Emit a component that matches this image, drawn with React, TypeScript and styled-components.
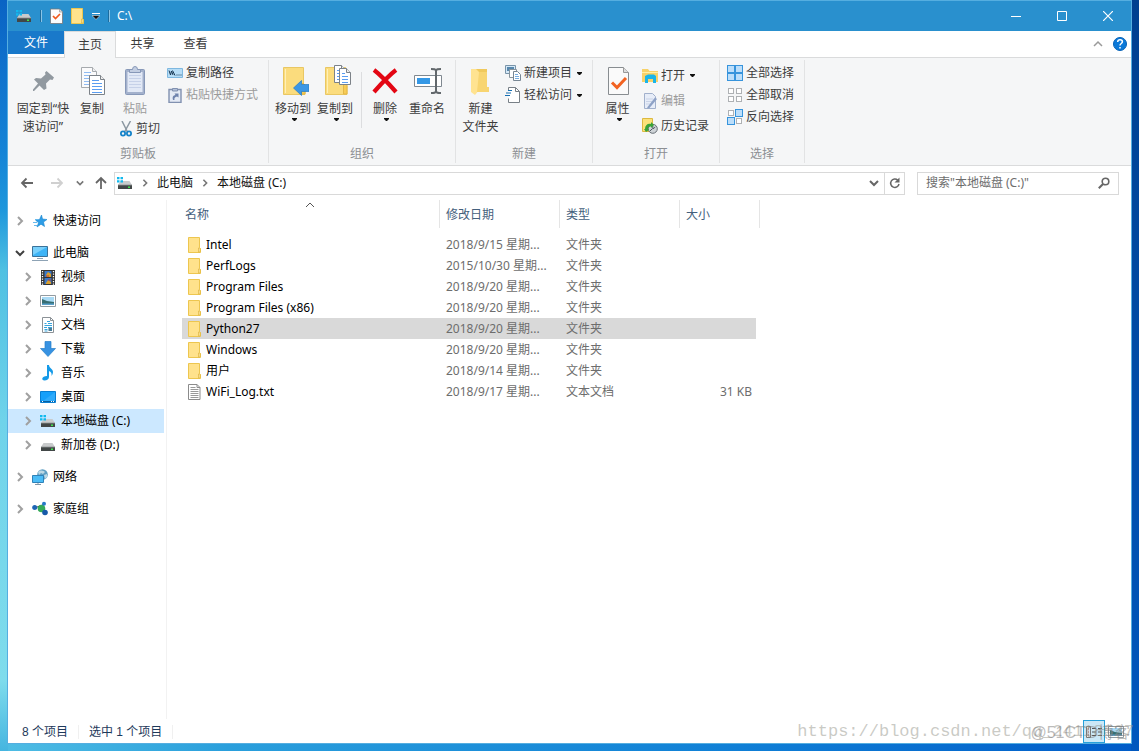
import React from 'react';
import styled, { createGlobalStyle, css } from 'styled-components';

const GlobalStyle = createGlobalStyle`
  *, *::before, *::after { box-sizing: border-box; }
  body {
    margin: 0;
    font-family: "Noto Sans", "Noto Sans CJK SC", sans-serif;
    font-size: 12px;
    line-height: 18px;
    color: #1b1b1b;
  }
  button, input {
    margin: 0;
    padding: 0;
    border: 0;
    background: none;
    font: inherit;
    color: inherit;
  }
  svg { display: block; flex: none; }
`;

const Desktop = styled.div`
  position: relative;
  display: flex;
  min-height: 100vh;
  padding: 0 7px 7px;
  background:
    linear-gradient(180deg, #0a63c4 0, #1483d6 150px, #1e97dc 210px, #4fc0e2 270px, #6fd3ea 420px, #7fdcec 680px, #45b5e0 100%) left / 8px 100% no-repeat,
    linear-gradient(180deg, #003f8f 0, #00479c 200px, #0058be 100%) right / 8px 100% no-repeat,
    linear-gradient(90deg, #4fbde4 0, #2a9fdc 20%, #0f7fd6 65%, #005cc8 100%);
`;

const Window = styled.main`
  flex: 1;
  min-width: 0;
  display: flex;
  flex-direction: column;
  background: #fff;
  border: 1px solid #55aee0;
`;

const TitleBar = styled.header`
  display: flex;
  align-items: center;
  height: 30px;
  padding-left: 8px;
  background: #2990ce;
  color: #fff;
`;

const QuickTools = styled.div`
  display: flex;
  align-items: center;
  gap: 8px;
`;

const ToolButton = styled.button`
  display: flex;
`;

const ToolDivider = styled.span`
  width: 2px;
  height: 12px;
  border-left: 1px solid #1c6c9e;
  border-right: 1px solid #8ac4e6;
`;

const Title = styled.h1`
  margin: 0 0 0 7px;
  font-size: 12px;
  font-weight: 400;
`;

const WindowControls = styled.div`
  display: flex;
  margin-left: auto;
  height: 100%;
`;

const ControlButton = styled.button`
  display: grid;
  place-items: center;
  width: 46px;
`;

const TabBar = styled.nav`
  display: flex;
  height: 27px;
  border-bottom: 1px solid #dadbdc;
  padding-right: 4px;
`;

const Tab = styled.button<{ $kind?: 'file' | 'active' }>`
  width: 53px;
  height: 26px;
  color: #3a3a3a;
  ${({ $kind }) => $kind === 'file' && css`
    width: 56px;
    height: 23px;
    background: #1979ca;
    color: #fff;
  `}
  ${({ $kind }) => $kind === 'active' && css`
    width: 52px;
    height: 27px;
    background: #f5f6f7;
    border: 1px solid #dadbdc;
    border-bottom: 0;
  `}
`;

const TabTools = styled.div`
  display: flex;
  align-items: center;
  gap: 10px;
  margin-left: auto;
`;

const Ribbon = styled.section`
  display: flex;
  min-height: 108px;
  padding: 2px 0;
  background: #f5f6f7;
  border-bottom: 1px solid #dadbdc;
`;

const RibbonGroup = styled.section<{ $width: number; $inset: number }>`
  display: flex;
  flex-direction: column;
  justify-content: space-between;
  width: ${({ $width }) => $width}px;
  padding: 1px 0 0 ${({ $inset }) => $inset}px;
  border-right: 1px solid #e2e3e4;
`;

const GroupTools = styled.div`
  display: flex;
  align-items: flex-start;
`;

const GroupLabel = styled.h2<{ $inset: number }>`
  margin: 0 0 0 -${({ $inset }) => $inset}px;
  font-size: 12px;
  font-weight: 400;
  text-align: center;
  color: #8c8f93;
`;

const LargeButton = styled.button<{ $width: number }>`
  display: flex;
  flex-direction: column;
  align-items: center;
  gap: 3px;
  width: ${({ $width }) => $width}px;
  padding-top: 4px;
  color: #3c3c3c;
  white-space: nowrap;
  &:disabled { color: #9b9b9b; }
`;

const LargeText = styled.span`
  display: flex;
  flex-direction: column;
  align-items: center;
  > svg { margin-left: 4px; }
`;

const ToolColumn = styled.div<{ $width?: number; $top?: number }>`
  display: flex;
  flex-direction: column;
  align-items: flex-start;
  width: ${({ $width }) => ($width ? `${$width}px` : 'auto')};
  padding-top: ${({ $top = 0 }) => $top}px;
`;

const SmallButton = styled.button<{ $tall?: boolean; $indent?: boolean }>`
  display: flex;
  align-items: center;
  gap: 3px;
  height: ${({ $tall }) => ($tall ? 25 : 22)}px;
  padding-left: ${({ $indent }) => ($indent ? 7 : 0)}px;
  color: #3c3c3c;
  white-space: nowrap;
  &:disabled { color: #9b9b9b; }
  > span + svg { margin-left: 2px; }
`;

const ToolSeparator = styled.span`
  width: 1px;
  height: 56px;
  margin: 11px 2px 0 5px;
  background: #dcdddf;
`;

const AddressRow = styled.div`
  display: flex;
  align-items: center;
  height: 34px;
  padding: 0 12px 0 4px;
`;

const NavButton = styled.button`
  display: grid;
  place-items: center;
  height: 24px;
`;

const NavButtons = styled.div`
  display: grid;
  grid-template-columns: 30px 30px 16px 26px;
`;

const AddressBox = styled.div`
  flex: 1;
  display: flex;
  align-items: center;
  height: 23px;
  border: 1px solid #d9d9d9;
  padding-left: 2px;
`;

const Crumbs = styled.div`
  display: flex;
  align-items: center;
  gap: 8px;
`;

const Crumb = styled.a`
  color: #111;
  text-decoration: none;
`;

const BoxButton = styled.button<{ $divided?: boolean }>`
  display: grid;
  place-items: center;
  width: 20px;
  height: 21px;
  border-left: ${({ $divided }) => ($divided ? '1px solid #d9d9d9' : '0')};
`;

const SearchBox = styled.label`
  display: flex;
  align-items: center;
  width: 202px;
  height: 23px;
  margin-left: 12px;
  padding: 0 8px;
  border: 1px solid #d9d9d9;
`;

const SearchInput = styled.input`
  flex: 1;
  min-width: 0;
  outline: 0;
  &::placeholder { color: #6d6d6d; opacity: 1; }
`;

const Body = styled.div`
  flex: 1;
  display: flex;
`;

const Sidebar = styled.nav`
  display: flex;
  flex-direction: column;
  gap: 8px;
  width: 159px;
  padding: 9px 2px 0 0;
  border-right: 1px solid #f2f2f2;
`;

const TreeList = styled.ul`
  margin: 0;
  padding: 0;
  list-style: none;
`;

const TreeRow = styled.a<{ $child?: boolean; $selected?: boolean }>`
  display: flex;
  align-items: center;
  height: 24px;
  padding-left: ${({ $child }) => ($child ? 15 : 7)}px;
  background: ${({ $selected }) => ($selected ? '#cce8ff' : 'transparent')};
  color: #000;
  text-decoration: none;
  white-space: nowrap;
`;

const TreeIcon = styled.span`
  margin: 0 5px 0 7px;
`;

const FileArea = styled.section`
  flex: 1;
  min-width: 0;
  padding-left: 15px;
`;

const FileTable = styled.table`
  width: 578px;
  table-layout: fixed;
  border-spacing: 0;
`;

const HeadCell = styled.th<{ $first?: boolean }>`
  position: relative;
  height: 28px;
  padding: 2px 0 0 ${({ $first }) => ($first ? 3 : 6)}px;
  border-right: 1px solid #e5e5e5;
  font-weight: 400;
  text-align: left;
  color: #44607c;
`;

const SortMark = styled.span`
  position: absolute;
  top: 0;
  left: 50%;
  margin-left: -6px;
`;

const SpacerCell = styled.td`
  height: 6px;
  padding: 0;
`;

const FileRow = styled.tr<{ $selected?: boolean }>`
  --row: ${({ $selected }) => ($selected ? '#d9d9d9' : 'transparent')};
`;

const FileCell = styled.td<{ $last?: boolean }>`
  height: 21px;
  padding: 0 ${({ $last }) => ($last ? 4 : 0)}px 0 6px;
  border-right: ${({ $last }) => ($last ? 4 : 0)}px solid transparent;
  background: var(--row);
  background-clip: padding-box;
  color: #6d6d6d;
  text-align: ${({ $last }) => ($last ? 'right' : 'left')};
  white-space: nowrap;
`;

const FileName = styled.span`
  display: flex;
  align-items: center;
  gap: 5px;
  color: #000;
`;

const StatusBar = styled.footer`
  display: flex;
  align-items: center;
  height: 24px;
  padding: 1px 4px 0 14px;
  color: #1e395b;
  font-family: "Liberation Sans", "Noto Sans CJK SC", sans-serif;
`;

const StatusText = styled.span`
  padding-right: 10px;
  margin-right: 10px;
  line-height: 14px;
  border-right: 1px solid #f0f0f0;
`;

const ViewButtons = styled.div`
  display: flex;
  margin-left: auto;
`;

const ViewButton = styled.button<{ $selected?: boolean }>`
  display: grid;
  place-items: center;
  width: 22px;
  height: 23px;
  border: 1px solid ${({ $selected }) => ($selected ? '#26a0da' : 'transparent')};
  background: ${({ $selected }) => ($selected ? '#cbe8f6' : 'transparent')};
`;

const UrlMark = styled.span`
  position: absolute;
  right: 5px;
  bottom: 7px;
  color: rgba(150, 150, 140, 0.5);
  font: 17px/24px "Liberation Mono", monospace;
`;

const SiteMark = styled.span`
  position: absolute;
  right: 9px;
  bottom: 6px;
  color: rgba(120, 120, 120, 0.5);
  font: 16px/24px "Liberation Sans", "Noto Sans CJK SC", sans-serif;
`;

/* ---------- icons ---------- */

const Drive = ({ win = false }: { win?: boolean }) => (
  <svg width="16" height="16" viewBox="0 0 16 16">
    <path d="M3.500 6h9L15 10H1z" fill="#c9cbcc" />
    <path d="M1 10h14v4H1z" fill="#424747" />
    <path d="M1 10h14" stroke="#8e9292" strokeWidth=".8" />
    <path d="M11 11.500h2v1.500h-2z" fill="#3fe34c" />
    {win && (
      <path d="M0 2h2.500v2.300H0zM3.500 2H6v2.300H3.500zM0 5.300h2.500v2.200H0zM3.500 5.300H6v2.200H3.500z" fill="#10b9ee" />
    )}
  </svg>
);

const Folder = () => (
  <svg width="13" height="16" viewBox="0 0 13 16">
    <path d="M.5.5h11v10l1 1v4H.5z" fill="#ffe28c" stroke="#edc64f" />
    <path d="M10.500 15v-4h1.500v4z" fill="#fff0b8" stroke="#e0b53d" strokeWidth=".7" />
  </svg>
);

const TextFile = () => (
  <svg width="13" height="16" viewBox="0 0 13 16">
    <path d="M.5.5h8.500l3 3v12H.5z" fill="#fff" stroke="#8b8b8b" />
    <path d="M9 .5v3h3" fill="none" stroke="#8b8b8b" />
    <path d="M2.500 3.500h5M2.500 5.500h8M2.500 7.500h8M2.500 9.500h8M2.500 11.500h8M2.500 13.500h8" stroke="#999" />
  </svg>
);

const CheckPage = () => (
  <svg width="13" height="16" viewBox="0 0 13 16">
    <path d="M.5 1h9l3 3v11.500H.5z" fill="#fcfcfc" stroke="#777" strokeWidth=".8" />
    <path d="M9.500 1v3h3" fill="#ddd" stroke="#999" strokeWidth=".7" />
    <path d="M3 8l2.500 2.500L10 6" fill="none" stroke="#f0591c" strokeWidth="1.700" />
  </svg>
);

const Caret = () => (
  <svg width="5" height="3" viewBox="0 0 5 3"><path d="M0 0h5v1L3 3H2L0 1z" fill="#111" /></svg>
);

type Dir = 'up' | 'down' | 'right';
const Chevron = ({ dir, color = '#777', size = 8, weight = 1.5 }: { dir: Dir; color?: string; size?: number; weight?: number }) => {
  const d = { up: 'M1 7l4-4 4 4', down: 'M1 3l4 4 4-4', right: 'M3 1l4 4-4 4' }[dir];
  return (
    <svg width={size} height={size} viewBox="0 0 10 10">
      <path d={d} fill="none" stroke={color} strokeWidth={weight} />
    </svg>
  );
};

const Arrow = ({ dir, color }: { dir: 'left' | 'right' | 'up'; color: string }) => (
  <svg width="14" height="14" viewBox="0 0 14 14">
    <path
      d={{ left: 'M13 7H2M6.500 2.500L2 7l4.500 4.500', right: 'M1 7h11M7.500 2.500L12 7l-4.500 4.500', up: 'M7 13V2M2 7l5-5 5 5' }[dir]}
      fill="none" stroke={color} strokeWidth="1.800"
    />
  </svg>
);

const Pin = () => (
  <svg width="32" height="32" viewBox="0 0 32 32">
    <path d="M19.500 6L27 12.500l-1.500 2.500-2.500-.5-4 4 .5 5L17 25l-4.500-4.500L7 26H6v-1.500l5-6L7 14.500 9 13l5 .5 4.500-4L18 7.500z" fill="#9199a0" />
  </svg>
);

const Page = ({ x, y, w = 15, h = 20 }: { x: number; y: number; w?: number; h?: number }) => (
  <g transform={`translate(${x} ${y})`}>
    <path d={`M.5 .5h${w - 4}l4 4v${h - 4}H.5z`} fill="#fff" stroke="#7c8288" />
    <path d={`M${w - 3.5} .5v4h4`} fill="#eee" stroke="#7c8288" />
    <path d={`M3 5.500h${w - 8}M3 8.500h${w - 5}M3 11.500h${w - 5}M3 14.500h${w - 5}`} stroke="#5b9df0" />
    {h > 18 && <path d={`M3 17.500h${w - 5}`} stroke="#5b9df0" />}
  </g>
);

const CopyPages = () => (
  <svg width="32" height="32" viewBox="0 0 32 32">
    <g opacity=".65"><Page x={5} y={2} /></g>
    <Page x={13} y={10} h={19} />
  </svg>
);

const Clipboard = () => (
  <svg width="32" height="32" viewBox="0 0 32 32">
    <rect x="6.500" y="4.500" width="19" height="25" rx="1" fill="#a3b1cc" stroke="#8798b8" />
    <path d="M8.500 7h15v20h-15z" fill="#e2e9f6" />
    <path d="M10 10.500h12M10 13.500h12M10 16.500h12M10 19.500h12M10 22.500h12" stroke="#c6d1e8" />
    <path d="M10.500 7.500V4.500h3a2.500 3 0 015 0h3v3z" fill="#c3cee2" stroke="#8798b8" />
  </svg>
);

const Scissors = () => (
  <svg width="14" height="16" viewBox="0 0 14 16">
    <path d="M3 0l5.500 11M11.500 0L5.500 11" stroke="#8b97a1" strokeWidth="1.500" />
    <circle cx="4" cy="12.500" r="2.100" fill="none" stroke="#1583c9" strokeWidth="1.800" />
    <circle cx="10" cy="12.500" r="2.100" fill="none" stroke="#1583c9" strokeWidth="1.800" />
  </svg>
);

const PathIcon = () => (
  <svg width="16" height="16" viewBox="0 0 16 16">
    <path d="M.5 3.500h15v9H.5z" fill="#b6ddf6" stroke="#7eb8e0" />
    <path d="M2 5.500l1.500 4.500L4.500 6l1.500 4M5.500 5.500L8 10.500M9.500 10h1M11.500 10h1M13.500 10h1" fill="none" stroke="#173753" />
  </svg>
);

const PasteLink = () => (
  <svg width="16" height="16" viewBox="0 0 16 16">
    <path d="M2 2.500h12v13H2z" fill="#e4eaf5" stroke="#8191b0" strokeWidth="1.400" />
    <path d="M5.500 4V1.500h5V4z" fill="#b3c0d8" stroke="#8191b0" />
    <path d="M6 13c-1-3 0-4.500 2.500-5L7.500 6.500h4v4L10 9.500c-2 .5-3 1.500-2.500 3.500z" fill="#6f83ad" />
  </svg>
);

const BigFolder = ({ children }: { children?: React.ReactNode }) => (
  <svg width="32" height="32" viewBox="0 0 32 32">
    <path d="M6.500 2.500h20v17l1.500 1v9H6.500z" fill="#fbdc7d" stroke="#e9c763" />
    <path d="M8.500 4v24" stroke="#fff0b6" />
    <path d="M24.500 29v-9.500l1.500-1.500 2 2V29z" fill="#f8cc55" stroke="#e3b748" />
    {children}
  </svg>
);

const MoveTo = () => (
  <BigFolder><path d="M16.500 23l8-7.500v4H32v7h-7.500v4z" fill="#3b97e5" stroke="#257bc5" strokeWidth=".7" /></BigFolder>
);

const CopyTo = () => (
  <BigFolder>
    <Page x={15} y={0} w={11} h={17} />
    <Page x={20} y={3} w={11} h={16} />
  </BigFolder>
);

const DeleteIcon = () => (
  <svg width="32" height="32" viewBox="0 0 32 32">
    <path d="M5 5c8 6 15 14 22 22M27 5C19 11 12 19 5 27" fill="none" stroke="#e30613" strokeWidth="4.200" />
  </svg>
);

const RenameIcon = () => (
  <svg width="32" height="32" viewBox="0 0 32 32">
    <path d="M3.500 10.500h27v11h-27z" fill="#fff" stroke="#7f8890" />
    <path d="M6 13h13v6H6z" fill="#3498e6" />
    <path d="M20 4c3 0 5 0 5 2v20c0 2-2 2-5 2M30 4c-3 0-5 0-5 2v20c0 2 2 2 5 2" fill="none" stroke="#62686c" strokeWidth="2" />
  </svg>
);

const NewFolder = () => (
  <svg width="32" height="32" viewBox="0 0 32 32">
    <path d="M9 4h13v18h2v5H11z" fill="#f0c95c" />
    <path d="M6 4h5l3 3v18l-4 5-4-3z" fill="#ffe391" />
    <path d="M14 7h8v15h2v5H12z" fill="#f8d571" />
  </svg>
);

const NewItem = () => (
  <svg width="16" height="16" viewBox="0 0 16 16">
    <path d="M.5.5h10v8H.5z" fill="#d4e8f7" stroke="#7994a9" />
    <path d="M2 2h7v4H2z" fill="#5787ac" />
    <path d="M4.500 4.500h7v8h-7z" fill="#fff" stroke="#89949c" />
    <path d="M8.500 6.500h4l3 3v6h-7z" fill="#fff" stroke="#788794" />
    <path d="M10 9.500h3M10 11.500h4M10 13.500h4" stroke="#78aee1" />
  </svg>
);

const EasyAccess = () => (
  <svg width="16" height="16" viewBox="0 0 16 16">
    <path d="M3.500 4V.5h7l4 4v11h-11v-4" fill="#fff" stroke="#788087" />
    <path d="M10.500.5v4h4" fill="none" stroke="#788087" />
    <path d="M3 3.500h4M1 6h5M0 8.500h5" stroke="#176fb2" strokeWidth="1.200" />
  </svg>
);

const PropertiesIcon = () => (
  <svg width="32" height="32" viewBox="0 0 32 32">
    <path d="M6.500 2.500h15l5 5v22h-20z" fill="#fafafa" stroke="#888d91" />
    <path d="M21.500 2.500v5h5" fill="#ddd" stroke="#999" />
    <path d="M10 17.500l5 5L24 13" fill="none" stroke="#f26322" strokeWidth="3" />
  </svg>
);

const OpenIcon = () => (
  <svg width="16" height="16" viewBox="0 0 16 16">
    <path d="M0 1h6l1.500 2H16v11H0z" fill="#f7d269" />
    <path d="M0 4h16v1H0z" fill="#fff0a8" />
    <path d="M3 15V8l3-1.500h6L14 8v7h-3v-4H6v4z" fill="#19b5e9" />
  </svg>
);

const EditIcon = () => (
  <svg width="16" height="16" viewBox="0 0 16 16">
    <path d="M2.500.5h8l3 3v12h-11z" fill="#e7edf8" stroke="#a2b1cc" />
    <path d="M4 6h7M4 8.500h6M4 11h5" stroke="#c9d3e7" />
    <path d="M5.500 14L13 4.500l2 1.500-7.500 9-2.500.5z" fill="#8ea2c6" />
  </svg>
);

const HistoryIcon = () => (
  <svg width="16" height="16" viewBox="0 0 16 16">
    <path d="M.5.5h10v13H.5z" fill="#fbe17a" stroke="#ddb940" />
    <circle cx="10.800" cy="10.800" r="4.500" fill="#ced3d7" stroke="#697077" />
    <path d="M10.800 8v3l2.500-2M8 13l2-2" fill="none" stroke="#525b61" />
    <path d="M3 11c0-4 3-6 6-5V4l3 3-3 3V8.500C7 8 6 10 6 11l1 1-3 2-2-3z" fill="#39a338" />
  </svg>
);

const SelectGrid = ({ on }: { on: boolean[] }) => (
  <svg width="16" height="16" viewBox="0 0 16 16">
    {on.map((active, i) => {
      const x = (i % 2) * 8;
      const y = i > 1 ? 8 : 0;
      return active
        ? <rect key={i} x={x + 0.5} y={y + 0.5} width="7" height="7" fill="#bcdefa" stroke="#3794dc" />
        : <rect key={i} x={x + 1.5} y={y + 1.5} width="5" height="5" fill="#fff" stroke="#aeb1b4" />;
    })}
  </svg>
);

const Star = () => (
  <svg width="16" height="16" viewBox="0 0 16 16">
    <path d="M9.500 2l1 4 4.500.500-3.500 2.500 1 4.500-3.500-2.300L5 14l1.500-4.200L3.500 7l4-.5z" fill="#2d9de6" stroke="#1785cf" strokeWidth=".6" />
    <path d="M1 9.500h4M2 12.500h3M3 6.500h3" stroke="#66b9ed" />
  </svg>
);

const Monitor = () => (
  <svg width="16" height="16" viewBox="0 0 16 16">
    <path d="M.5 1.500h15v10H.5z" fill="#3eb4f6" stroke="#3b7299" />
    <path d="M1 2h14L1 10z" fill="#79d0fb" />
    <path d="M5 13.500h6M0 15.500h16" stroke="#8ea3b5" />
  </svg>
);

const Video = () => (
  <svg width="16" height="16" viewBox="0 0 16 16">
    <path d="M1 1h14v15H1z" fill="#333" />
    <path d="M4.500 2h7v6h-7zM4.500 9h7v6h-7z" fill="#3c78c6" />
    <path d="M6 6l2-3 3 2v3H7zM6 14l2-3 3 2v2H6z" fill="#d99f2d" />
    <path d="M6 7h3M8 11h3" stroke="#c33d3b" />
    <path d="M2.500 2v14M13.500 2v14" stroke="#fff" strokeWidth="1.300" strokeDasharray="1.300 1.200" />
  </svg>
);

const Picture = () => (
  <svg width="16" height="16" viewBox="0 0 16 16">
    <path d="M.5 2.500h15v11H.5z" fill="#fff" stroke="#929ba1" />
    <path d="M2 4h12v8H2z" fill="#a9daf5" />
    <path d="M2 6l5 2 7 1v3H2z" fill="#376e73" />
    <path d="M2 10.500h12V12H2z" fill="#5aa1cd" />
  </svg>
);

const DocumentIcon = () => (
  <svg width="16" height="16" viewBox="0 0 16 16">
    <path d="M2.500.5h8l3 3v12h-11z" fill="#fff" stroke="#8c9297" />
    <path d="M10.500.5v3h3" fill="none" stroke="#8c9297" />
    <path d="M7 4.500h3M4.500 6.500h2M8 6.500h4M4.500 8.500h7.500M4 10.500h3M8 10.500h4M4.500 12.500h3M4.500 14h3" stroke="#37a4dd" />
    <path d="M8.500 11h3.500v3H8.500z" fill="#4b7e9a" />
  </svg>
);

const Download = () => (
  <svg width="16" height="16" viewBox="0 0 16 16">
    <path d="M5 .5h6v7h4.500L8 15.500.5 7.500H5z" fill="#3792e2" stroke="#277fc8" strokeWidth=".7" />
  </svg>
);

const Music = () => (
  <svg width="16" height="16" viewBox="0 0 16 16">
    <path d="M7 0h2c0 3 4 4 4 7 0 2-1 3-1.500 4 .5-3-.5-4-2.500-5v6c0 2-2 3.500-4.500 3.500C1 15.500 1.500 11 7 11z" fill="#159ae8" />
  </svg>
);

const DesktopIcon = () => (
  <svg width="16" height="16" viewBox="0 0 16 16">
    <path d="M.5 2.500h15v11H.5z" fill="#16a0fa" stroke="#087ed2" />
    <path d="M1 12.500h14" stroke="#075f9f" />
    <path d="M2 12.500h1M11 12.500h1M13 12.500h1" stroke="#fff" />
    <path d="M15 3L3 12h12z" fill="#47b6fb" opacity=".5" />
  </svg>
);

const Network = () => (
  <svg width="16" height="16" viewBox="0 0 16 16">
    <circle cx="10.500" cy="5.500" r="5.300" fill="#5f9fc3" />
    <path d="M6 3c3-3 6-1 7 0l-2 2-2-1-2 2zM12 6l3-1v3l-2 2z" fill="#bdd8e4" />
    <path d="M.5 6.500h11v7H.5z" fill="#4bbcf6" stroke="#2f82b8" />
    <path d="M3 15.500h6M6 14v1" stroke="#8097a8" />
  </svg>
);

const HomeGroup = () => (
  <svg width="16" height="16" viewBox="0 0 16 16">
    <path d="M3 6.500l7 .5 2-4M10 7l3 5" stroke="#a6c5d6" />
    <circle cx="9.500" cy="7.500" r="3.800" fill="#36ab58" />
    <circle cx="2.700" cy="6.500" r="2.500" fill="#1e65b4" />
    <circle cx="12" cy="2.700" r="2" fill="#2678c7" />
    <circle cx="13" cy="11.500" r="2.800" fill="#1759a8" />
  </svg>
);

const Refresh = () => (
  <svg width="12" height="12" viewBox="0 0 12 12">
    <path d="M8.800 3.200A4.200 4.200 0 1010 7" fill="none" stroke="#666" strokeWidth="1.500" />
    <path d="M10.500 .5v5h-5z" fill="#666" />
  </svg>
);

const Magnifier = () => (
  <svg width="12" height="12" viewBox="0 0 12 12">
    <circle cx="7.500" cy="4.500" r="3.300" fill="none" stroke="#666" strokeWidth="1.600" />
    <path d="M5 7L.8 11.200" stroke="#666" strokeWidth="2" />
  </svg>
);

const Help = () => (
  <svg width="14" height="14" viewBox="0 0 14 14">
    <circle cx="7" cy="7" r="6.500" fill="#0c79d8" stroke="#0560b5" />
    <path d="M4.700 5c0-3 4.700-2.700 4.700-.3C9.400 6.500 7 6.500 7 8.500M7 10v1.600" fill="none" stroke="#fff" strokeWidth="1.500" />
  </svg>
);

const DetailsView = () => (
  <svg width="16" height="12" viewBox="0 0 16 12">
    <path d="M.5.5h4v11h-4z" fill="#fff" stroke="#777" />
    <path d="M2 3h1M2 6h1M2 9h1" stroke="#b34b37" />
    <path d="M6 2.500h4M12 2.500h4M6 6h4M12 6h4M6 9.500h4M12 9.500h4" stroke="#555" />
  </svg>
);

/* ---------- data ---------- */

const places = [
  { label: '视频', icon: <Video /> },
  { label: '图片', icon: <Picture /> },
  { label: '文档', icon: <DocumentIcon /> },
  { label: '下载', icon: <Download /> },
  { label: '音乐', icon: <Music /> },
  { label: '桌面', icon: <DesktopIcon /> },
  { label: '本地磁盘 (C:)', icon: <Drive win />, selected: true },
  { label: '新加卷 (D:)', icon: <Drive /> },
];

const files = [
  ['Intel', '2018/9/15 星期...'],
  ['PerfLogs', '2015/10/30 星期...'],
  ['Program Files', '2018/9/20 星期...'],
  ['Program Files (x86)', '2018/9/20 星期...'],
  ['Python27', '2018/9/20 星期...'],
  ['Windows', '2018/9/20 星期...'],
  ['用户', '2018/9/14 星期...'],
  ['WiFi_Log.txt', '2018/9/17 星期...', '文本文档', '31 KB'],
];

/* ---------- composed parts ---------- */

interface LargeProps { icon: React.ReactNode; lines: string[]; width: number; menu?: boolean; disabled?: boolean }
const Large = ({ icon, lines, width, menu, disabled }: LargeProps) => (
  <LargeButton $width={width} disabled={disabled}>
    {icon}
    <LargeText>
      {lines.map((line) => <span key={line}>{line}</span>)}
      {menu && <Caret />}
    </LargeText>
  </LargeButton>
);

interface SmallProps { icon: React.ReactNode; label: string; menu?: boolean; disabled?: boolean; tall?: boolean; indent?: boolean }
const Small = ({ icon, label, menu, disabled, tall, indent }: SmallProps) => (
  <SmallButton disabled={disabled} $tall={tall} $indent={indent}>
    {icon}<span>{label}</span>{menu && <Caret />}
  </SmallButton>
);

interface GroupProps { label: string; width: number; inset: number; children: React.ReactNode }
const Group = ({ label, width, inset, children }: GroupProps) => (
  <RibbonGroup $width={width} $inset={inset}>
    <GroupTools>{children}</GroupTools>
    <GroupLabel $inset={inset}>{label}</GroupLabel>
  </RibbonGroup>
);

interface TreeProps { label: string; icon: React.ReactNode; child?: boolean; selected?: boolean; open?: boolean }
const TreeItem = ({ label, icon, child, selected, open }: TreeProps) => (
  <TreeRow href="#" $child={child} $selected={selected}>
    <Chevron dir={open ? 'down' : 'right'} color={open ? '#404040' : '#a0a0a0'} size={10} weight={2} />
    <TreeIcon>{icon}</TreeIcon>
    {label}
  </TreeRow>
);

export default function App() {
  return (
    <Desktop>
      <GlobalStyle />
      <Window>
        <TitleBar>
          <QuickTools>
            <Drive win />
            <ToolDivider />
            <ToolButton aria-label="属性"><CheckPage /></ToolButton>
            <ToolButton aria-label="新建文件夹"><Folder /></ToolButton>
            <ToolButton aria-label="自定义快速访问工具栏">
              <svg width="8" height="7" viewBox="0 0 8 7"><path d="M0 .5h8" stroke="#fff" /><path d="M0 2.500h8L4 6.500z" fill="#111" stroke="#fff" strokeWidth=".5" /></svg>
            </ToolButton>
            <ToolDivider />
          </QuickTools>
          <Title>C:\</Title>
          <WindowControls>
            <ControlButton aria-label="最小化"><svg width="10" height="10"><path d="M0 5.500h10" stroke="#fff" /></svg></ControlButton>
            <ControlButton aria-label="最大化"><svg width="10" height="10"><path d="M.5.5h9v9h-9z" fill="none" stroke="#fff" /></svg></ControlButton>
            <ControlButton aria-label="关闭"><svg width="10" height="10"><path d="M0 0l10 10M10 0L0 10" stroke="#fff" strokeWidth="1.200" /></svg></ControlButton>
          </WindowControls>
        </TitleBar>

        <TabBar>
          <Tab $kind="file">文件</Tab>
          <Tab $kind="active">主页</Tab>
          <Tab>共享</Tab>
          <Tab>查看</Tab>
          <TabTools>
            <ToolButton aria-label="折叠功能区"><Chevron dir="up" color="#9a9a9a" size={10} /></ToolButton>
            <ToolButton aria-label="帮助"><Help /></ToolButton>
          </TabTools>
        </TabBar>

        <Ribbon>
          <Group label="剪贴板" width={261} inset={6}>
            <Large icon={<Pin />} lines={['固定到“快', '速访问”']} width={58} />
            <Large icon={<CopyPages />} lines={['复制']} width={40} />
            <ToolColumn $width={55}>
              <Large icon={<Clipboard />} lines={['粘贴']} width={46} disabled />
              <Small icon={<Scissors />} label="剪切" indent />
            </ToolColumn>
            <ToolColumn $top={1}>
              <Small icon={<PathIcon />} label="复制路径" />
              <Small icon={<PasteLink />} label="粘贴快捷方式" disabled />
            </ToolColumn>
          </Group>
          <Group label="组织" width={187} inset={3}>
            <Large icon={<MoveTo />} lines={['移动到']} width={42} menu />
            <Large icon={<CopyTo />} lines={['复制到']} width={42} menu />
            <ToolSeparator />
            <Large icon={<DeleteIcon />} lines={['删除']} width={42} menu />
            <Large icon={<RenameIcon />} lines={['重命名']} width={42} />
          </Group>
          <Group label="新建" width={137} inset={0}>
            <Large icon={<NewFolder />} lines={['新建', '文件夹']} width={49} />
            <ToolColumn $top={1}>
              <Small icon={<NewItem />} label="新建项目" menu />
              <Small icon={<EasyAccess />} label="轻松访问" menu />
            </ToolColumn>
          </Group>
          <Group label="打开" width={127} inset={0}>
            <Large icon={<PropertiesIcon />} lines={['属性']} width={49} menu />
            <ToolColumn $top={2}>
              <Small icon={<OpenIcon />} label="打开" menu tall />
              <Small icon={<EditIcon />} label="编辑" disabled tall />
              <Small icon={<HistoryIcon />} label="历史记录" tall />
            </ToolColumn>
          </Group>
          <Group label="选择" width={85} inset={7}>
            <ToolColumn $top={1}>
              <Small icon={<SelectGrid on={[true, true, true, true]} />} label="全部选择" />
              <Small icon={<SelectGrid on={[false, false, false, false]} />} label="全部取消" />
              <Small icon={<SelectGrid on={[false, true, true, false]} />} label="反向选择" />
            </ToolColumn>
          </Group>
        </Ribbon>

        <AddressRow>
          <NavButtons>
            <NavButton aria-label="后退"><Arrow dir="left" color="#666" /></NavButton>
            <NavButton aria-label="前进"><Arrow dir="right" color="#d0d0d0" /></NavButton>
            <NavButton aria-label="最近位置"><Chevron dir="down" color="#777" size={8} weight={2} /></NavButton>
            <NavButton aria-label="向上"><Arrow dir="up" color="#666" /></NavButton>
          </NavButtons>
          <AddressBox>
            <Crumbs>
              <Drive win />
              <Chevron dir="right" weight={2} />
              <Crumb href="#">此电脑</Crumb>
              <Chevron dir="right" weight={2} />
              <Crumb href="#">本地磁盘 (C:)</Crumb>
            </Crumbs>
            <WindowControls>
              <BoxButton aria-label="以前的位置"><Chevron dir="down" size={10} weight={2} color="#666" /></BoxButton>
              <BoxButton aria-label="刷新" $divided><Refresh /></BoxButton>
            </WindowControls>
          </AddressBox>
          <SearchBox>
            <SearchInput type="text" aria-label="搜索" placeholder={'搜索"本地磁盘 (C:)"'} />
            <Magnifier />
          </SearchBox>
        </AddressRow>

        <Body>
          <Sidebar>
            <TreeItem label="快速访问" icon={<Star />} />
            <div>
              <TreeItem label="此电脑" icon={<Monitor />} open />
              <TreeList>
                {places.map((p) => <li key={p.label}><TreeItem {...p} child /></li>)}
              </TreeList>
            </div>
            <TreeItem label="网络" icon={<Network />} />
            <TreeItem label="家庭组" icon={<HomeGroup />} />
          </Sidebar>
          <FileArea>
            <FileTable>
              <colgroup><col width="258" /><col width="120" /><col width="120" /><col width="80" /></colgroup>
              <thead>
                <tr>
                  <HeadCell $first>名称<SortMark><Chevron dir="up" size={10} weight={1} color="#555" /></SortMark></HeadCell>
                  <HeadCell>修改日期</HeadCell>
                  <HeadCell>类型</HeadCell>
                  <HeadCell>大小</HeadCell>
                </tr>
              </thead>
              <tbody>
                <tr><SpacerCell colSpan={4} /></tr>
                {files.map(([name, date, type = '文件夹', size = '']) => (
                  <FileRow key={name} $selected={name === 'Python27'}>
                    <FileCell><FileName>{size ? <TextFile /> : <Folder />}{name}</FileName></FileCell>
                    <FileCell>{date}</FileCell>
                    <FileCell>{type}</FileCell>
                    <FileCell $last>{size}</FileCell>
                  </FileRow>
                ))}
              </tbody>
            </FileTable>
          </FileArea>
        </Body>

        <StatusBar>
          <StatusText>8 个项目</StatusText>
          <StatusText>选中 1 个项目</StatusText>
          <ViewButtons>
            <ViewButton $selected aria-label="详细信息"><DetailsView /></ViewButton>
            <ViewButton aria-label="大图标"><Picture /></ViewButton>
          </ViewButtons>
        </StatusBar>
      </Window>
      <UrlMark>https://blog.csdn.net/qq_24118527</UrlMark>
      <SiteMark>@51CTO博客</SiteMark>
    </Desktop>
  );
}
